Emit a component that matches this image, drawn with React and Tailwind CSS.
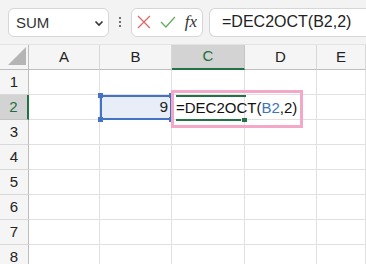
import { useState } from 'react';

const cols = ['A', 'B', 'C', 'D', 'E'];
const rows = [1, 2, 3, 4, 5, 6, 7, 8];

export default function App() {
    const [name] = useState('SUM');

    return (
        <div className="w-[366px] h-[264px] overflow-hidden bg-white font-['Liberation_Sans',Arial,sans-serif] text-[#222]">
            {/* Toolbar */}
            <div className="h-[45px] bg-[#f3f3f3] flex items-center pl-[8px] border-b border-[#e3e3e3]">
                <div className="w-[101px] h-[29px] bg-white border border-[#d6d6d6] rounded-[6px] flex items-center justify-between pl-[7px] pr-[4px]">
                    <span className="text-[15px] leading-none text-[#333]">{name}</span>
                    <svg width="10" height="10" viewBox="0 0 10 10" className="mt-[1px]">
                        <path d="M1.5 3.5 L5 7 L8.5 3.5" fill="none" stroke="#333" strokeWidth="1.6" />
                    </svg>
                </div>
                <div className="w-[22px] flex flex-col items-center gap-[2px]">
                    <span className="w-[2px] h-[2px] bg-[#444] rounded-full" />
                    <span className="w-[2px] h-[2px] bg-[#444] rounded-full" />
                    <span className="w-[2px] h-[2px] bg-[#444] rounded-full" />
                </div>
                <div className="w-[72px] h-[29px] bg-white border border-[#d6d6d6] rounded-[6px] flex items-center px-[5px] gap-[9px]">
                    <svg width="14" height="14" viewBox="0 0 14 14">
                        <path d="M1 1 L13 13 M13 1 L1 13" stroke="#e06a6a" strokeWidth="1.3" />
                    </svg>
                    <svg width="16" height="14" viewBox="0 0 16 14">
                        <path d="M1 7 L6 12 L15 2" fill="none" stroke="#62ad5e" strokeWidth="1.3" />
                    </svg>
                    <span className="font-['Liberation_Serif',serif] italic text-[17px] leading-none text-[#333] -mt-[2px]">fx</span>
                </div>
                <div className="ml-[6px] flex-1 h-[29px] bg-white border border-[#d6d6d6] border-r-0 rounded-l-[6px] flex items-center pl-[12px]">
                    <span className="text-[16px] leading-none text-[#222]">=DEC2OCT(B2,2)</span>
                </div>
            </div>

            {/* Grid */}
            <div className="relative">
                <div className="grid grid-cols-[29px_71px_72px_73px_72px_1fr]">
                    <div className="h-[25px] bg-[#f5f5f5] border-r border-b border-[#bdbdbd] relative">
                        <svg width="18" height="18" viewBox="0 0 18 18" className="absolute left-[8px] top-[2px]">
                            <path d="M18 0 L18 18 L0 18 Z" fill="#b5b5b5" />
                        </svg>
                    </div>
                    {cols.map((c) => (
                        <div
                            key={c}
                            className={`h-[25px] flex items-center justify-center text-[15px] border-r ${c === 'C' ? 'bg-[#d3d3d3] text-[#1e6e3e] border-[#c4c4c4] border-b-2 border-b-[#217346]' : 'bg-[#f5f5f5] text-[#222] border-[#d8d8d8] border-b border-b-[#bdbdbd]'}`}
                        >
                            {c}
                        </div>
                    ))}
                    {rows.map((r) => (
                        <Row key={r} r={r} />
                    ))}
                </div>

                {/* B2 selection */}
                <div className="absolute left-[100px] top-[50px] w-[72px] h-[25px] border-2 border-[#4472c4]" />
                <span className="absolute left-[98px] top-[48px] w-[5px] h-[5px] bg-[#4472c4]" />
                <span className="absolute left-[98px] top-[72px] w-[5px] h-[5px] bg-[#4472c4]" />
                <span className="absolute left-[169px] top-[48px] w-[5px] h-[5px] bg-[#4472c4]" />
                <span className="absolute left-[169px] top-[72px] w-[5px] h-[5px] bg-[#4472c4]" />

                {/* formula highlight */}
                <div className="absolute left-[171px] top-[45px] w-[132px] h-[38px] border-[3px] border-[#f3a8c8]" />
                <div className="absolute left-[176px] top-[50px] w-[70px] h-[2px] bg-[#217346]" />
                <div className="absolute left-[176px] top-[74px] w-[65px] h-[2px] bg-[#217346]" />
                <div className="absolute left-[242px] top-[73px] w-[5px] h-[4px] bg-[#217346]" />
                <div className="absolute left-[176px] top-[52px] h-[22px] flex items-center text-[15px] whitespace-nowrap text-[#111]">
                    =DEC2OCT(<span className="text-[#3b74bb]">B2</span>,2)
                </div>
            </div>
        </div>
    );
}

function Row({ r }) {
    const active = r === 2;
    return (
        <>
            <div
                className={`h-[25px] flex items-center justify-center text-[15px] border-b ${active ? 'bg-[#d3d3d3] text-[#1e6e3e] border-[#c4c4c4] border-r-2 border-r-[#217346]' : 'bg-[#f5f5f5] text-[#222] border-[#d8d8d8] border-r border-r-[#bdbdbd]'}`}
            >
                {r}
            </div>
            {cols.map((c) => (
                <div
                    key={c}
                    className={`h-[25px] border-r border-b border-[#e1e1e1] flex items-center justify-end pr-[3px] text-[15.5px] ${active && c === 'B' ? 'bg-[#e8eef8]' : 'bg-white'}`}
                >
                    {active && c === 'B' ? '9' : ''}
                </div>
            ))}
        </>
    );
}
